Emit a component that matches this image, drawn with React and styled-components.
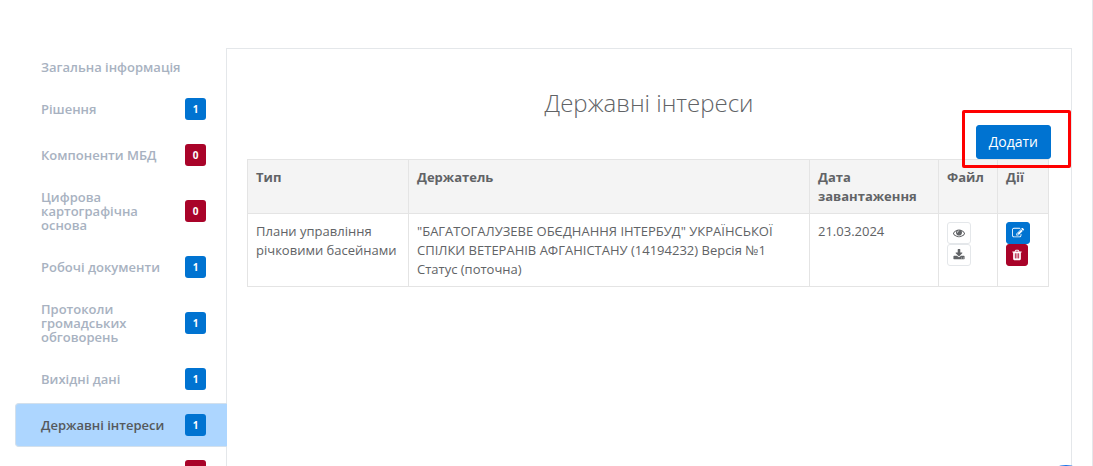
import React, { useState } from 'react';
import styled, { createGlobalStyle } from 'styled-components';

const GlobalStyle = createGlobalStyle`
  * {
    box-sizing: border-box;
  }

  body {
    margin: 0;
    background: #fff;
    color: #616366;
    font-family: 'Open Sans', sans-serif;
    font-size: 13px;
    line-height: 19px;
  }
`;

const Page = styled.div`
  display: flex;
  align-items: stretch;
  height: 100vh;
  overflow: hidden;
  padding: 48px 20px 0 15px;
  border-right: 1px solid #e4e7ea;
`;

const Sidebar = styled.nav`
  display: flex;
  flex-direction: column;
  gap: 2px;
  flex: 0 0 212px;
  margin-right: -1px;
  padding-top: 1px;
  z-index: 1;
`;

const NavLink = styled.a`
  display: flex;
  align-items: center;
  justify-content: space-between;
  flex-shrink: 0;
  gap: 8px;
  padding: 10px 21px 10px 25px;
  border: 1px solid ${props => props.$active ? '#d3e0ec' : 'transparent'};
  border-right: 0;
  border-radius: 4px 0 0 4px;
  background: ${props => props.$active ? '#add6ff' : 'transparent'};
  color: ${props => props.$active ? '#55595c' : '#a8b2c1'};
  font-weight: 600;
  line-height: 14px;
  text-decoration: none;
`;

const Badge = styled.span`
  flex: 0 0 21px;
  height: 22px;
  border-radius: 3px;
  background: ${props => props.$empty ? '#a90329' : '#0073d1'};
  color: #fff;
  font-size: 10px;
  font-weight: 700;
  line-height: 22px;
  text-align: center;
`;

const Panel = styled.main`
  flex: 1;
  min-width: 0;
  padding: 36px 20px 0;
  border: 1px solid #e4e7ea;
  border-bottom: 0;
`;

const Title = styled.h1`
  margin: 0;
  font-size: 24px;
  font-weight: 300;
  line-height: 36px;
  text-align: center;
`;

const Toolbar = styled.div`
  display: flex;
  justify-content: flex-end;
  padding-top: 4px;
`;

const Highlighted = styled.div`
  position: relative;

  &::after {
    content: '';
    position: absolute;
    inset: -15px -20px -9px -14px;
    border: 3px solid #fe0000;
    border-radius: 2px;
    pointer-events: none;
  }
`;

const AddButton = styled.button`
  display: block;
  padding: 6px 12px;
  border: 1px solid #0073d1;
  border-radius: 3px;
  background: #0073d1;
  color: #fff;
  font-family: inherit;
  font-size: 14px;
  line-height: 20px;
  cursor: pointer;
`;

const Table = styled.table`
  width: calc(100% - 2px);
  table-layout: fixed;
  border-collapse: collapse;

  th,
  td {
    padding: 8px 8px 7px;
    border: 1px solid #e4e4e4;
    text-align: left;
    vertical-align: top;
  }

  th {
    background: #f4f4f4;
    font-weight: 700;
  }
`;

const HeadCell = styled.th`
  width: ${props => props.$width || 'auto'};
`;

const IconButton = styled.button`
  display: flex;
  align-items: center;
  height: 22px;
  padding: 0 5px;
  border: 1px solid ${props => props.$border};
  border-radius: 3px;
  background: ${props => props.$bg};
  color: ${props => props.$color || '#fff'};
  cursor: pointer;
`;

const Glyph = styled.svg`
  display: block;
  width: ${props => props.$width || 12}px;
  height: 12px;
  fill: currentColor;
`;

const ChatButton = styled.button`
  position: fixed;
  right: 0;
  bottom: -53px;
  width: 54px;
  height: 54px;
  padding: 0;
  border: 0;
  border-radius: 50%;
  background: #1a73e8;
  cursor: pointer;
`;

const EyeIcon = () => (
  <Glyph viewBox="0 0 1792 1792">
    <path d="M1664 960q-152-236-381-353 61 104 61 225 0 185-131.5 316.5t-316.5 131.5-316.5-131.5-131.5-316.5q0-121 61-225-229 117-381 353 133 205 333.5 326.5t434.5 121.5 434.5-121.5 333.5-326.5zm-720-384q0-20-14-34t-34-14q-125 0-214.5 89.5t-89.5 214.5q0 20 14 34t34 14 34-14 14-34q0-86 61-147t147-61q20 0 34-14t14-34zm848 384q0 34-20 69-140 230-376.5 368.5t-499.5 138.5-499.5-139-376.5-368q-20-35-20-69t20-69q140-229 376.5-368t499.5-139 499.5 139 376.5 368q20 35 20 69z" />
  </Glyph>
);

const DownloadIcon = () => (
  <Glyph viewBox="0 0 1792 1792">
    <path d="M1344 1344q0-26-19-45t-45-19-45 19-19 45 19 45 45 19 45-19 19-45zm256 0q0-26-19-45t-45-19-45 19-19 45 19 45 45 19 45-19 19-45zm128-224v320q0 40-28 68t-68 28h-1472q-40 0-68-28t-28-68v-320q0-40 28-68t68-28h465l135 136q58 56 136 56t136-56l136-136h464q40 0 68 28t28 68zm-325-569q17 41-14 70l-448 448q-18 19-45 19t-45-19l-448-448q-31-29-14-70 17-39 59-39h256v-448q0-26 19-45t45-19h256q26 0 45 19t19 45v448h256q42 0 59 39z" />
  </Glyph>
);

const EditIcon = () => (
  <Glyph viewBox="0 0 1792 1792">
    <path d="M888 1184l116-116-152-152-116 116v56h96v96h56zm440-720q-16-16-33 1l-350 350q-17 17-1 33t33-1l350-350q17-17 1-33zm80 594v190q0 119-84.5 203.5t-203.5 84.5h-832q-119 0-203.5-84.5t-84.5-203.5v-832q0-119 84.5-203.5t203.5-84.5h832q63 0 117 25 15 7 18 23 3 17-9 29l-49 49q-14 14-32 8-23-6-45-6h-832q-66 0-113 47t-47 113v832q0 66 47 113t113 47h832q66 0 113-47t47-113v-126q0-13 9-22l64-64q15-15 35-7t20 29zm-96-738l288 288-672 672h-288v-288zm444 132l-92 92-288-288 92-92q28-28 68-28t68 28l152 152q28 28 28 68t-28 68z" />
  </Glyph>
);

const TrashIcon = () => (
  <Glyph $width={10} viewBox="150 0 1492 1792">
    <path d="M704 1376v-704q0-14-9-23t-23-9h-64q-14 0-23 9t-9 23v704q0 14 9 23t23 9h64q14 0 23-9t9-23zm256 0v-704q0-14-9-23t-23-9h-64q-14 0-23 9t-9 23v704q0 14 9 23t23 9h64q14 0 23-9t9-23zm256 0v-704q0-14-9-23t-23-9h-64q-14 0-23 9t-9 23v704q0 14 9 23t23 9h64q14 0 23-9t9-23zm-544-992h448l-48-117q-7-9-17-11h-317q-10 2-17 11zm928 32v64q0 14-9 23t-23 9h-96v948q0 83-47 143.5t-113 60.5h-832q-66 0-113-58.5t-47-141.5v-952h-96q-14 0-23-9t-9-23v-64q0-14 9-23t23-9h309l70-167q15-37 54-63t79-26h320q40 0 79 26t54 63l70 167h309q14 0 23 9t9 23z" />
  </Glyph>
);

const sections = [
  { id: 'general', label: 'Загальна інформація' },
  { id: 'decisions', label: 'Рішення', count: 1 },
  { id: 'components', label: 'Компоненти МБД', count: 0 },
  { id: 'base', label: 'Цифрова картографічна основа', count: 0 },
  { id: 'documents', label: 'Робочі документи', count: 1 },
  { id: 'protocols', label: 'Протоколи громадських обговорень', count: 1 },
  { id: 'source', label: 'Вихідні дані', count: 1 },
  { id: 'interests', label: 'Державні інтереси', count: 1 },
  { id: 'next', label: '', count: 0 },
];

const rows = [
  {
    id: 1,
    type: 'Плани управління річковими басейнами',
    holder: '"БАГАТОГАЛУЗЕВЕ ОБЄДНАННЯ ІНТЕРБУД" УКРАЇНСЬКОЇ СПІЛКИ ВЕТЕРАНІВ АФГАНІСТАНУ (14194232) Версія №1 Статус (поточна)',
    date: '21.03.2024',
  },
];

function App() {
  const [active, setActive] = useState('interests');

  return (
    <>
      <GlobalStyle />
      <Page>
        <Sidebar>
          {sections.map(({ id, label, count }) => (
            <NavLink
              key={id}
              href={`#${id}`}
              $active={id === active}
              onClick={() => setActive(id)}
            >
              <span>{label}</span>
              {count !== undefined && (
                // an entry without a label has no number in its badge
                <Badge $empty={count === 0}>{label && count}</Badge>
              )}
            </NavLink>
          ))}
        </Sidebar>

        <Panel>
          <Title>Державні інтереси</Title>
          <Toolbar>
            <Highlighted>
              <AddButton type="button">Додати</AddButton>
            </Highlighted>
          </Toolbar>

          <Table>
            <thead>
              <tr>
                <HeadCell $width="161px">Тип</HeadCell>
                <HeadCell>Держатель</HeadCell>
                <HeadCell $width="129px">Дата завантаження</HeadCell>
                <HeadCell $width="59px">Файл</HeadCell>
                <HeadCell $width="51px">Дії</HeadCell>
              </tr>
            </thead>
            <tbody>
              {rows.map(row => (
                <tr key={row.id}>
                  <td>{row.type}</td>
                  <td>{row.holder}</td>
                  <td>{row.date}</td>
                  <td>
                    <IconButton type="button" aria-label="Переглянути" $bg="#fff" $border="#e4e7ea" $color="#616366">
                      <EyeIcon />
                    </IconButton>
                    <IconButton type="button" aria-label="Завантажити" $bg="#fff" $border="#e4e7ea" $color="#616366">
                      <DownloadIcon />
                    </IconButton>
                  </td>
                  <td>
                    <IconButton type="button" aria-label="Редагувати" $bg="#0073d1" $border="#0073d1">
                      <EditIcon />
                    </IconButton>
                    <IconButton type="button" aria-label="Видалити" $bg="#a90329" $border="#a90329">
                      <TrashIcon />
                    </IconButton>
                  </td>
                </tr>
              ))}
            </tbody>
          </Table>
        </Panel>
      </Page>
      <ChatButton type="button" aria-label="Чат" />
    </>
  );
}

export default App;
